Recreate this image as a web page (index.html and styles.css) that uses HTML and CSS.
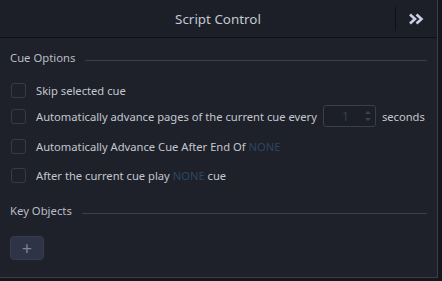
FILE: index.html
```html
<!DOCTYPE html>
<html>
<head>
<meta charset="utf-8">
<link rel="stylesheet" href="styles.css">
</head>
<body>
<div class="panel">
  <div class="header">
    <div class="title">Script Control</div>
    <div class="collapse">
      <svg width="16" height="12" viewBox="0 0 16 12"><path d="M2 1.5 L7 6 L2 10.5 M8.5 1.5 L13.5 6 L8.5 10.5" fill="none" stroke="#c9d0e2" stroke-width="2.6"/></svg>
    </div>
  </div>
  <div class="body">
    <div class="section-head"><span>Cue Options</span><div class="rule"></div></div>
    <div class="options">
      <div class="row r1"><span class="cb"></span><span>Skip selected cue</span></div>
      <div class="row r2"><span class="cb"></span><span>Automatically advance pages of the current cue every</span>
        <span class="spin"><span class="spin-val">1</span><span class="arrows"><svg width="8" height="14" viewBox="0 0 8 14"><path d="M1 5 L4 2 L7 5 Z M1 9 L4 12 L7 9 Z" fill="#3b4252"/></svg></span></span>
        <span>seconds</span></div>
      <div class="row r3"><span class="cb"></span><span>Automatically Advance Cue After End Of <span class="none">NONE</span></span></div>
      <div class="row r4"><span class="cb"></span><span>After the current cue play <span class="none">NONE</span> cue</span></div>
    </div>
    <div class="section-head key"><span>Key Objects</span><div class="rule"></div></div>
    <button class="add">+</button>
  </div>
</div>
</body>
</html>
```
FILE: styles.css
```css
html, body {
  margin: 0;
  padding: 0;
  background: #15171d;
  width: 442px;
  height: 281px;
  overflow: hidden;
  font-family: "Noto Sans", "Open Sans", sans-serif;
}
.panel {
  width: 437px;
  height: 277px;
  background: #1e2129;
  border-right: 1px solid #3a3e49;
  border-bottom: 1px solid #3a3e49;
  display: flex;
  flex-direction: column;
}
.header {
  height: 37px;
  border-bottom: 1px solid #0f1116;
  display: flex;
  align-items: center;
  background: #1c1f27;
}
.title {
  flex: 1;
  text-align: center;
  color: #c3c8d3;
  font-size: 13.4px;
  padding-left: 41px;
}
.collapse {
  width: 40px;
  height: 24px;
  border-left: 1px solid #0e1015;
  display: flex;
  align-items: center;
  justify-content: center;
  margin-right: 1px;
}
.body {
  padding: 0 10px;
  display: flex;
  flex-direction: column;
}
.section-head {
  display: flex;
  align-items: center;
  color: #b9bdc7;
  font-size: 11.3px;
  height: 18px;
  margin-top: 10px;
  white-space: nowrap;
}
.section-head .rule {
  flex: 1;
  height: 1px;
  background: #3b3f49;
  margin-left: 10px;
  margin-top: 7px;
}
.section-head.key { margin-top: 15px; }
.options {
  display: flex;
  flex-direction: column;
  margin-top: 13px;
}
.row {
  display: flex;
  align-items: center;
  height: 22px;
  color: #c3c7d0;
  font-size: 11.2px;
  white-space: nowrap;
}
.r2 { margin-top: 4px; }
.r3 { margin-top: 8px; }
.r4 { margin-top: 7px; }
.cb {
  width: 13px;
  height: 13px;
  border: 1px solid #373b45;
  border-radius: 3px;
  margin-left: 1px;
  margin-right: 10px;
  flex: none;
}
.none { color: #2c4660; }
.spin {
  width: 51px;
  height: 20px;
  border: 1px solid #3a3e4a;
  border-radius: 3px;
  background: #1c1f27;
  margin: 0 6px 0 6px;
  display: flex;
  align-items: center;
  flex: none;
}
.spin-val {
  flex: 1;
  text-align: center;
  color: #3a3f4b;
  font-size: 12px;
  padding-left: 6px;
}
.arrows {
  width: 14px;
  display: flex;
  justify-content: center;
}
.add {
  margin-top: 17px;
  width: 34px;
  height: 24px;
  background: #2e3445;
  border: 1px solid #363d4f;
  border-radius: 4px;
  color: #7b8498;
  font-size: 18px;
  line-height: 20px;
  padding: 0;
  font-family: "Noto Sans", sans-serif;
}
```
